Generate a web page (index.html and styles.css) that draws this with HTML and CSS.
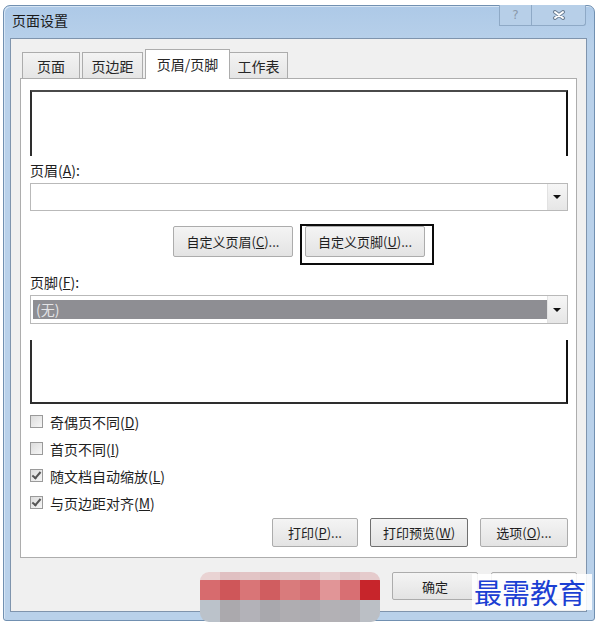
FILE: index.html
```html
<!DOCTYPE html>
<html lang="zh-CN">
<head>
  <meta charset="UTF-8">
  <title>页面设置</title>
  <link rel="stylesheet" href="styles.css">
</head>
<body>

  <div class="window">

    <div class="titlebar">
      <span class="title">页面设置</span>
      <div class="caption-buttons">
        <span class="caption-btn is-help">?</span>
        <span class="caption-btn is-close">
          <svg width="14" height="10" viewBox="0 0 14 10">
            <path d="M3 2 L11 8 M11 2 L3 8" stroke="#6c7f94" stroke-width="4" stroke-linecap="round"/>
            <path d="M3 2 L11 8 M11 2 L3 8" stroke="#ffffff" stroke-width="2" stroke-linecap="round"/>
          </svg>
        </span>
      </div>
    </div>

    <div class="panel">

      <div class="tabs">
        <span class="tab is-page">页面</span>
        <span class="tab is-margin">页边距</span>
        <span class="tab is-active">页眉/页脚</span>
        <span class="tab is-sheet">工作表</span>
      </div>

      <div class="tab-page">

        <div class="preview is-header"></div>

        <div class="field-label">页眉(<u>A</u>):</div>
        <div class="select">
          <span class="select-value"></span>
          <span class="select-arrow"></span>
        </div>

        <div class="custom-buttons">
          <button type="button" class="button is-custom">自定义页眉(<u>C</u>)...</button>
          <button type="button" class="button is-custom is-marked">自定义页脚(<u>U</u>)...</button>
        </div>

        <div class="field-label is-footer">页脚(<u>F</u>):</div>
        <div class="select is-footer">
          <span class="select-value">(无)</span>
          <span class="select-arrow"></span>
        </div>

        <div class="preview is-footer"></div>

        <ul class="options">
          <li><span class="checkbox"></span>奇偶页不同(<u>D</u>)</li>
          <li><span class="checkbox"></span>首页不同(<u>I</u>)</li>
          <li><span class="checkbox is-checked"></span>随文档自动缩放(<u>L</u>)</li>
          <li><span class="checkbox is-checked"></span>与页边距对齐(<u>M</u>)</li>
        </ul>

        <div class="page-buttons">
          <button type="button" class="button is-print">打印(<u>P</u>)...</button>
          <button type="button" class="button is-preview">打印预览(<u>W</u>)</button>
          <button type="button" class="button is-options">选项(<u>O</u>)...</button>
        </div>

      </div>

      <div class="dialog-buttons">
        <button type="button" class="button is-ok">确定</button>
        <!-- 取消 按钮的文字被水印盖住了 -->
        <button type="button" class="button is-cancel" aria-label="取消"></button>
      </div>

    </div>
  </div>

  <!-- 打了马赛克的水印 -->
  <div class="mosaic">
    <div class="mosaic-row is-top"></div>
    <div class="mosaic-row is-red"></div>
    <div class="mosaic-row is-gray"></div>
  </div>

  <div class="watermark">最需教育</div>

</body>
</html>
```

FILE: styles.css
```css
html, body {
  height: 100%;
}
body {
  position: relative;
  margin: 0;
  background: #fff;
  font-family: "Noto Sans CJK SC", "Liberation Sans", sans-serif;
  color: #1e1e1e;
  overflow: hidden;
}
u {
  text-decoration: underline;
  text-underline-offset: 1px;
}

.window {
  box-sizing: border-box;
  width: 592px;
  height: 616px;
  margin: 5px 0 0 3px;
  padding: 0 7px 8px 6px;
  border: 1px solid #7190b1;
  border-radius: 7px 7px 3px 3px;
  background: linear-gradient(#adc9e7, #b9d1ea 40px);
  box-shadow: inset 1px 1px 0 #d6e5f4;
}

.titlebar {
  display: flex;
  justify-content: space-between;
  align-items: flex-start;
  height: 32px;
}
.title {
  margin: 4px 0 0 2px;
  font-size: 14px;
  line-height: 20px;
  color: #1a1a1a;
}
.caption-buttons {
  display: flex;
  margin-right: 1px;
}
.caption-btn {
  display: flex;
  justify-content: center;
  align-items: center;
  box-sizing: border-box;
  height: 21px;
  margin-top: -1px;
  border: 1px solid #8ea9c6;
  border-top: none;
  background: #b7cfe8;
}
.caption-btn.is-help {
  width: 33px;
  font-family: "DejaVu Sans", sans-serif;
  font-size: 12px;
  color: #8a99aa;
}
.caption-btn.is-close {
  width: 54px;
  border-left: none;
  border-radius: 0 0 3px 0;
}

.panel {
  box-sizing: border-box;
  height: 574px;
  padding: 10px 9px 11px 9px;
  border: 1px solid #7f94ad;
  background: #f0f0f0;
}

.tabs {
  display: flex;
  align-items: flex-end;
  height: 29px;
}
.tab {
  box-sizing: border-box;
  display: flex;
  justify-content: center;
  align-items: center;
  height: 26px;
  margin-left: 2px;
  border: 1px solid #acacac;
  border-bottom: none;
  background: linear-gradient(#f3f3f3, #e5e5e5);
  font-size: 14px;
  color: #262626;
}
.tab.is-page { width: 58px; }
.tab.is-margin { width: 61px; }
.tab.is-active {
  position: relative;
  z-index: 1;
  width: 85px;
  height: 30px;
  margin-bottom: -1px;
  padding-bottom: 2px;
  background: #fff;
}
.tab.is-sheet {
  width: 58px;
  margin-left: 0;
  border-left: none;
}

.tab-page {
  box-sizing: border-box;
  height: 480px;
  padding: 0 8px 0 9px;
  border: 1px solid #adadad;
  background: #fff;
}

.preview {
  box-sizing: border-box;
  border: 2px solid #2e2e2e;
}
.preview.is-header {
  height: 66px;
  margin-top: 11px;
  border-bottom: none;
  border-top-color: #4a4a4a;
  border-right-color: #111;
}
.preview.is-footer {
  height: 64px;
  margin-top: 16px;
  border-top: none;
  border-right-color: #111;
}

.field-label {
  margin-top: 6px;
  font-size: 14px;
  line-height: 16px;
}
.field-label.is-footer {
  margin-top: 17px;
}

.select {
  display: flex;
  box-sizing: border-box;
  height: 28px;
  margin-top: 5px;
  border: 1px solid #b9b9b9;
  background: #fff;
}
.select-value {
  flex: 1;
}
.select-arrow {
  position: relative;
  width: 19px;
  border-left: 1px solid #e2e2e2;
  background: linear-gradient(#f6f6f6, #e6e6e6);
}
.select-arrow::after {
  content: "";
  position: absolute;
  top: 11px;
  left: 5px;
  border-left: 4px solid transparent;
  border-right: 4px solid transparent;
  border-top: 4px solid #111;
}
.select.is-footer {
  height: 29px;
  padding: 4px 0 4px 2px;
}
.select.is-footer .select-value {
  padding-left: 3px;
  background: #8e8e93;
  font-size: 14px;
  line-height: 19px;
  color: #e4e4e6;
}
.select.is-footer .select-arrow {
  margin: -4px 0;
}
.select.is-footer .select-arrow::after {
  top: 12px;
}

.button {
  box-sizing: border-box;
  height: 29px;
  padding: 0;
  border: 1px solid #acacac;
  border-radius: 2px;
  background: linear-gradient(#f4f4f4, #e3e3e3);
  font-family: "Noto Sans CJK SC", "Liberation Sans", sans-serif;
  font-size: 13px;
  color: #1e1e1e;
}

.custom-buttons {
  display: flex;
  justify-content: center;
  gap: 12px;
  margin-top: 15px;
}
.button.is-custom {
  height: 31px;
  width: 120px;
}
.button.is-marked {
  position: relative;
}
.button.is-marked::after {
  content: "";
  position: absolute;
  top: -3px;
  left: -6px;
  right: -10px;
  bottom: -9px;
  border: 2px solid #0c0c0c;
}

.options {
  margin: 4px 0 0;
  padding: 0;
  list-style: none;
}
.options li {
  display: flex;
  align-items: center;
  height: 27px;
  font-size: 14px;
}
.checkbox {
  box-sizing: border-box;
  position: relative;
  width: 13px;
  height: 13px;
  margin-right: 7px;
  border: 1px solid #9a9a9a;
  background: linear-gradient(135deg, #dcdcdc, #f6f6f6);
}
.checkbox.is-checked::after {
  content: "";
  position: absolute;
  left: 3px;
  top: 0;
  width: 3px;
  height: 7px;
  border-right: 2px solid #555;
  border-bottom: 2px solid #555;
  transform: rotate(40deg);
}

.page-buttons {
  display: flex;
  justify-content: flex-end;
  gap: 12px;
  margin-top: 2px;
}
.button.is-print { width: 86px; }
.button.is-preview {
  width: 98px;
  border-color: #6f6f6f;
}
.button.is-options { width: 88px; }

.dialog-buttons {
  display: flex;
  justify-content: flex-end;
  gap: 13px;
  margin-top: 14px;
}
.button.is-ok,
.button.is-cancel {
  width: 86px;
  height: 28px;
}

.mosaic {
  position: absolute;
  top: 572px;
  left: 200px;
  width: 180px;
  border-radius: 9px;
  overflow: hidden;
}
.mosaic-row {
  height: 20px;
}
.mosaic-row.is-top {
  height: 8px;
  background: linear-gradient(to right,
    #e9d3d3 0 20px, #e0c0c2 20px 40px, #e2c4c5 40px 60px,
    #dfbfc0 60px 80px, #e1c3c4 80px 100px, #e0c1c3 100px 120px,
    #e6cfd0 120px 140px, #e0c3c5 140px 160px, #e5cbcc 160px 180px);
}
.mosaic-row.is-red {
  background: linear-gradient(to right,
    #d76b6e 0 20px, #cf5659 20px 40px, #d97577 40px 60px,
    #d05d60 60px 80px, #d97b7c 80px 100px, #d66d72 100px 120px,
    #e19597 120px 140px, #d86f73 140px 160px, #c7252b 160px 180px);
}
.mosaic-row.is-gray {
  height: 22px;
  background: linear-gradient(to right,
    #bbc2ca 0 20px, #aba9ad 20px 40px, #b3b2b8 40px 60px,
    #a9a8ad 60px 80px, #afadb1 80px 100px, #adacb1 100px 120px,
    #b3b1b5 120px 140px, #b1b0b5 140px 160px, #bbbfc5 160px 180px);
}

.watermark {
  position: absolute;
  top: 574px;
  left: 472px;
  width: 118px;
  padding-left: 2px;
  background: rgba(255, 255, 255, 0.88);
  font-size: 28px;
  line-height: 36px;
  color: #1b3fd3;
}
```
